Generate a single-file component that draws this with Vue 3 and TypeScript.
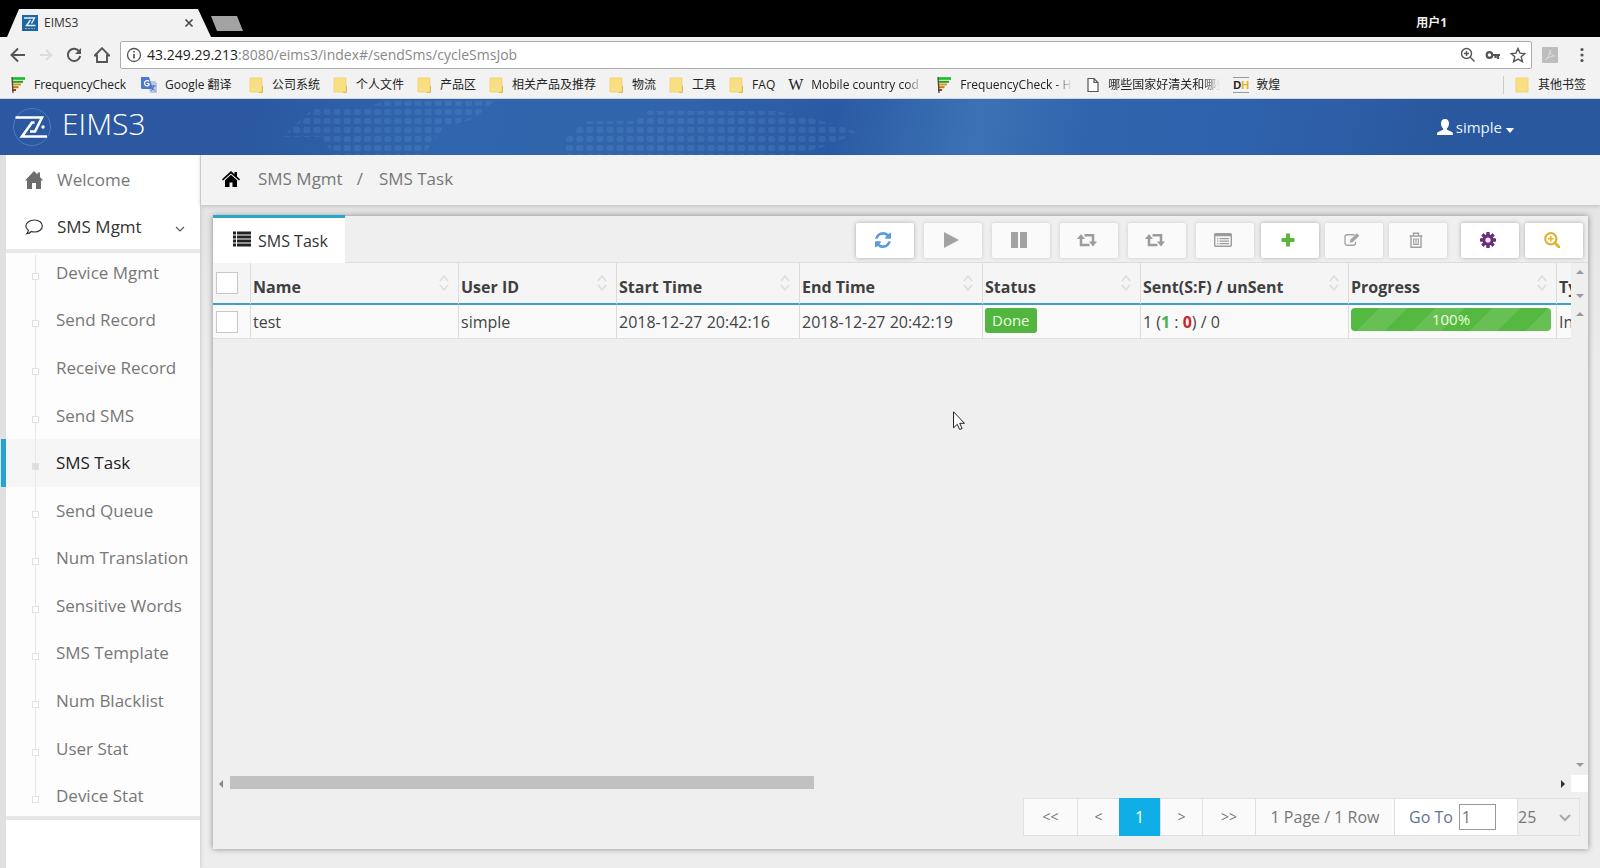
<script setup lang="ts">
import { ref } from 'vue'

interface Bookmark {
  icon: 'freq' | 'translate' | 'folder' | 'wiki' | 'doc' | 'dh'
  label: string
  clipped?: boolean
}

const bookmarks: Bookmark[] = [
  { icon: 'freq', label: 'FrequencyCheck' },
  { icon: 'translate', label: 'Google 翻译' },
  { icon: 'folder', label: '公司系统' },
  { icon: 'folder', label: '个人文件' },
  { icon: 'folder', label: '产品区' },
  { icon: 'folder', label: '相关产品及推荐' },
  { icon: 'folder', label: '物流' },
  { icon: 'folder', label: '工具' },
  { icon: 'folder', label: 'FAQ' },
  { icon: 'wiki', label: 'Mobile country cod', clipped: true },
  { icon: 'freq', label: 'FrequencyCheck - H', clipped: true },
  { icon: 'doc', label: '哪些国家好清关和哪些', clipped: true },
  { icon: 'dh', label: '敦煌' },
]

const subItems: string[] = [
  'Device Mgmt', 'Send Record', 'Receive Record', 'Send SMS', 'SMS Task', 'Send Queue',
  'Num Translation', 'Sensitive Words', 'SMS Template', 'Num Blacklist', 'User Stat', 'Device Stat',
]
const activeItem = ref('SMS Task')

const columns: string[] = ['Name', 'User ID', 'Start Time', 'End Time', 'Status', 'Sent(S:F) / unSent', 'Progress', 'Type']
const address = ref('43.249.29.213:8080/eims3/index#/sendSms/cycleSmsJob')
const progress = ref(100)
const goTo = ref('1')
const pageSize = ref('25')
const gearAngles: number[] = [0, 45, 90, 135, 180, 225, 270, 315]
</script>

<template>
  <div class="window">
    <div class="tabstrip">
      <div class="tab">
        <svg class="favicon" viewBox="0 0 16 16" aria-hidden="true">
          <rect width="16" height="16" fill="#20659f" />
          <path d="M2 3h10.500L9.500 8.500M8.500 5L4.500 10.500h9" fill="none" stroke="#e4f2ff" stroke-width="1.400" />
          <path d="M3 13.500h10" stroke="#83aed3" stroke-dasharray="2 1" />
        </svg>
        <span class="tab-title">EIMS3</span>
        <button class="tab-close" aria-label="Close tab">
          <svg viewBox="0 0 10 10"><path d="M1.500 1.500l7 7M8.500 1.500l-7 7" stroke="#4a4a4a" stroke-width="1.700" /></svg>
        </button>
      </div>
      <button class="new-tab" aria-label="New tab"></button>
      <span class="profile">用户1</span>
    </div>

    <div class="toolbar">
      <button class="nav" aria-label="Back">
        <svg viewBox="0 0 16 16"><path d="M15 8H2M8 1.500L1.500 8 8 14.500" fill="none" stroke="#555" stroke-width="2" /></svg>
      </button>
      <button class="nav" aria-label="Forward">
        <svg viewBox="0 0 16 16"><path d="M2 8h11M8 3l5.500 5L8 13" fill="none" stroke="#dcdcdc" stroke-width="2" /></svg>
      </button>
      <button class="nav" aria-label="Reload">
        <svg viewBox="0 0 16 16"><path d="M13.300 4.500A6.200 6.200 0 1 0 14.200 9" fill="none" stroke="#555" stroke-width="2" /><path d="M15 1v6H9z" fill="#555" /></svg>
      </button>
      <button class="nav" aria-label="Home">
        <svg viewBox="0 0 16 16"><path d="M.8 8.500L8 1.200l7.200 7.300H13V15H3V8.500z" fill="none" stroke="#555" stroke-width="1.900" /></svg>
      </button>
      <div class="omnibox">
        <svg class="info" viewBox="0 0 16 16" aria-hidden="true"><circle cx="8" cy="8" r="6.500" fill="none" stroke="#555" stroke-width="1.300" /><path d="M8 7v4.500M8 4v1.600" stroke="#555" stroke-width="1.700" /></svg>
        <div class="address">
          <a href="#/sendSms/cycleSmsJob"><b>{{ address.slice(0, 13) }}</b>{{ address.slice(13) }}</a>
        </div>
        <svg class="omni-icon" viewBox="0 0 16 16" aria-hidden="true"><circle cx="6.500" cy="6.500" r="5" fill="none" stroke="#555" stroke-width="1.400" /><path d="M10.300 10.300L14.500 14.500M4 6.500h5M6.500 4v5" stroke="#555" stroke-width="1.400" /></svg>
        <svg class="omni-icon" viewBox="0 0 16 16" aria-hidden="true"><circle cx="4.500" cy="8" r="2.800" fill="none" stroke="#555" stroke-width="2.200" /><path d="M7 8h8M13 8v4M10.500 8v3" stroke="#555" stroke-width="2.200" /></svg>
        <svg class="omni-icon" viewBox="0 0 16 16" aria-hidden="true"><path d="M8 1.500l2 4.600 5 .4-3.800 3.300 1.200 4.900L8 12.100l-4.400 2.600 1.200-4.900L1 6.500l5-.4z" fill="none" stroke="#555" stroke-width="1.400" /></svg>
      </div>
      <svg class="ext" viewBox="0 0 16 16" aria-hidden="true"><rect width="16" height="16" rx="1" fill="#bdbdbd" /><path d="M3 13c3-2 5-6 5-10 0 4 2 6 5 6-3 0-7 1-10 4z" fill="none" stroke="#dadada" /></svg>
      <button class="dots" aria-label="Browser menu"><svg viewBox="0 0 4 16"><circle cx="2" cy="2.500" r="1.600" /><circle cx="2" cy="8" r="1.600" /><circle cx="2" cy="13.500" r="1.600" /></svg></button>
    </div>

    <nav class="bookmarks">
      <a v-for="(b, i) in bookmarks" :key="i" href="#" class="bookmark" :class="b.icon">
        <svg v-if="b.icon === 'freq'" class="bm-icon" viewBox="0 0 16 16" aria-hidden="true">
          <path d="M2 1.500h13" stroke="#16bb2c" stroke-width="2.600" /><path d="M2 4.800h11" stroke="#2f9a1b" stroke-width="2" />
          <path d="M2 7.500h9" stroke="#c5a216" stroke-width="2" /><path d="M2 10.200h6.500" stroke="#c47a22" stroke-width="2" />
          <path d="M2 13h4" stroke="#a33a20" stroke-width="2" /><path d="M2 0l1 16" stroke="#4c4330" stroke-width="1.300" />
        </svg>
        <svg v-else-if="b.icon === 'translate'" class="bm-icon" viewBox="0 0 16 16" aria-hidden="true">
          <path d="M6 4h8l2 2v10H9z" fill="#b9c7e4" /><path d="M0 0h8l4 12H1L0 11z" fill="#4c79cf" />
          <path d="M8 4.500A2.600 2.600 0 1 0 8 8V6.500H5.700" fill="none" stroke="#fff" stroke-width="1.200" /><path d="M10 9h5M12.500 8v1c0 2-1 4-2.500 5M11 10c.5 2 2 3 3.500 4" fill="none" stroke="#5672aa" />
        </svg>
        <svg v-else-if="b.icon === 'folder'" class="bm-icon" viewBox="0 0 16 16" aria-hidden="true">
          <path d="M1 1h12v14H1z" fill="#f8df83" /><path d="M1 1h12v14H1z" fill="none" stroke="#efd478" /><path d="M13.500 9v6.500H10" stroke="#dfba50" fill="none" />
        </svg>
        <span v-else-if="b.icon === 'wiki'" class="bm-icon w-mark">W</span>
        <svg v-else-if="b.icon === 'doc'" class="bm-icon" viewBox="0 0 16 16" aria-hidden="true"><path d="M3 1.500h6l4 4v9H3zM9 1.500v4h4" fill="#fff" stroke="#555" stroke-width="1.200" /></svg>
        <span v-else class="bm-icon dh-mark"><b>D</b><b>H</b></span>
        <span class="bm-label" :class="{ clipped: b.clipped }">{{ b.label }}</span>
      </a>
      <a href="#" class="bookmark other">
        <svg class="bm-icon" viewBox="0 0 16 16" aria-hidden="true"><path d="M1 1h12v14H1z" fill="#f8df83" stroke="#efd478" /></svg>
        <span class="bm-label">其他书签</span>
      </a>
    </nav>

    <header class="banner">
      <svg class="world" viewBox="0 0 760 56" preserveAspectRatio="none" aria-hidden="true">
        <defs>
          <pattern id="dots" width="10" height="9" patternUnits="userSpaceOnUse"><rect x="1" y="1" width="7" height="6" rx="2" fill="#8ebcf0" opacity=".13" /></pattern>
        </defs>
        <path d="M10 38l30-28h50l20-8h110l-20 18-30 8-20 28H60l-10-18z" fill="url(#dots)" />
        <path d="M290 40l20-18h50l10-10h130l60 14 20 8-30 12-30 10H290z" fill="url(#dots)" />
      </svg>
      <a href="#" class="brand">
        <svg class="logo" viewBox="0 0 40 40" aria-hidden="true">
          <circle cx="20" cy="20" r="18.500" fill="none" stroke="#4a7cc0" stroke-width="1" />
          <path d="M3.500 10.500h26.500L23 24.500h-5" fill="none" stroke="#fff" stroke-width="2.600" />
          <path d="M22.500 15.500L20 15.500L10 29.500h25" fill="none" stroke="#fff" stroke-width="2.600" />
          <circle cx="31" cy="20" r="1.700" fill="#fff" />
        </svg>
        <span>EIMS3</span>
      </a>
      <button class="user">
        <svg class="person" viewBox="0 0 16 16" aria-hidden="true"><path d="M8 0c2.800 0 4 2 4 4.500 0 2-.8 3.800-2 4.800v1.400l5 2.300c.7.400 1 1.500 1 3H0c0-1.500.3-2.600 1-3l5-2.300V9.300c-1.200-1-2-2.800-2-4.800C4 2 5.200 0 8 0z" fill="#fff" /></svg>
        simple
        <svg class="caret" viewBox="0 0 10 6" aria-hidden="true"><path d="M0 0h10L5 6z" fill="#fff" /></svg>
      </button>
    </header>

    <div class="body">
      <aside class="sidebar">
        <a href="#" class="menu-item">
          <svg viewBox="0 0 18 18" aria-hidden="true"><path d="M9 0l3.500 3.500V1.500H15V6l3 3.500h-2V18h-5v-6H7v6H2V9.500H0z" fill="#6d6d6d" /></svg>
          <span>Welcome</span>
        </a>
        <a href="#" class="menu-item open">
          <svg viewBox="0 0 18 18" aria-hidden="true"><path d="M9.500 2C14 2 17.300 4.600 17.300 8s-3.300 6-7.800 6c-1.200 0-2.200-.2-3.200-.5-1.200 1.300-2.600 2-4.500 2.200 1-1 1.500-2 1.500-3.500C1.700 11 .8 9.700.8 8c0-3.400 4.200-6 8.700-6z" fill="none" stroke="#333" stroke-width="1.200" /></svg>
          <span>SMS Mgmt</span>
          <svg class="chev" viewBox="0 0 10 6" aria-hidden="true"><path d="M1 1l4 4 4-4" fill="none" stroke="#555" stroke-width="1.200" /></svg>
        </a>
        <ul class="submenu">
          <li v-for="item in subItems" :key="item" :class="{ active: item === activeItem }">
            <a href="#" @click.prevent="activeItem = item"><i class="node"></i>{{ item }}</a>
          </li>
        </ul>
      </aside>

      <main class="main">
        <nav class="crumbs">
          <svg viewBox="0 0 18 16" aria-hidden="true"><path d="M9 0l3.500 3.200V1H15v4.500L18 8.300l-1 1.200L9 2.400 1 9.500 0 8.300z" /><path d="M9 3.800l6 5.400V16h-4.500v-4.500h-3V16H3V9.200z" /></svg>
          <a href="#">SMS Mgmt</a><span class="sep">/</span><a href="#">SMS Task</a>
        </nav>

        <section class="panel">
          <div class="panel-head">
            <button class="panel-tab">
              <svg viewBox="0 0 18 16" aria-hidden="true"><path d="M0 2h3M0 6h3M0 10h3M0 14h3M4 2h14M4 6h14M4 10h14M4 14h14" stroke="#222" stroke-width="2.900" /></svg>
              SMS Task
            </button>
            <div class="tools">
              <div class="group wide">
                <button class="tool" aria-label="Refresh"><svg viewBox="0 0 1536 1536"><path fill="#5b9bdc" d="M1511 928q0 5-1 7-64 268-268 434.500t-478 166.500q-146 0-282.500-55t-243.500-157l-129 129q-19 19-45 19t-45-19-19-45v-448q0-26 19-45t45-19h448q26 0 45 19t19 45-19 45l-137 137q71 66 161 102t187 36q134 0 250-65t186-179q11-17 53-117 8-23 30-23h192q13 0 22.500 9.500t9.500 22.500zm25-800v448q0 26-19 45t-45 19h-448q-26 0-45-19t-19-45 19-45l138-138q-148-137-349-137-134 0-250 65t-186 179q-11 17-53 117-8 23-30 23h-199q-13 0-22.500-9.500t-9.500-22.500v-7q65-268 270-434.500t480-166.500q146 0 284 55.500t245 156.500l130-129q19-19 45-19t45 19 19 45z" /></svg></button>
                <button class="tool off" aria-label="Start"><svg viewBox="0 0 16 16"><path d="M1 0l15 8-15 8z" fill="#a2a2a2" /></svg></button>
                <button class="tool off" aria-label="Pause"><svg viewBox="0 0 16 16"><path d="M0 0h7v16H0zM9 0h7v16H9z" fill="#a2a2a2" /></svg></button>
                <button v-for="n in 2" :key="n" class="tool off" aria-label="Repeat"><svg class="retweet" viewBox="0 0 20 14"><path d="M4 4v8h8.500M7.500 2.200H16V10" fill="none" stroke="#9c9c9c" stroke-width="2.500" /><path d="M0 6l4-5 4 5zM12 8.500l4 5 4-5z" fill="#9c9c9c" /></svg></button>
                <button class="tool off" aria-label="Details"><svg class="list" viewBox="0 0 18 14"><rect x=".7" y=".7" width="16.600" height="12.600" rx="1" fill="none" stroke="#9c9c9c" stroke-width="1.400" /><path d="M1 2h16" stroke="#9c9c9c" stroke-width="2.600" /><path d="M3 5.700h1.300M5.500 5.700H15M3 8.200h1.300M5.500 8.200H15M3 10.700h1.300M5.500 10.700H15" stroke="#9c9c9c" stroke-width="1.300" /></svg></button>
              </div>
              <div class="group edit">
                <button class="tool" aria-label="Add"><svg class="plus" viewBox="0 0 14 14"><path d="M7 .5v13M.5 7h13" stroke="#5cb53c" stroke-width="4" /></svg></button>
                <button class="tool off" aria-label="Edit"><svg class="list" viewBox="0 0 18 16"><path d="M12 2H3.500Q1 2 1 4.500v7Q1 14 3.500 14h7q2.500 0 2.500-2.500V10" fill="none" stroke="#a5a5a5" stroke-width="1.500" /><path d="M6.500 11l.7-3.500L14.500.3l2.900 2.800L10 10.300z" fill="#a5a5a5" /></svg></button>
                <button class="tool off" aria-label="Delete"><svg viewBox="0 0 14 16"><path d="M.5 4h13M4.500 4V1.200h5V4M2 4v11.200h10V4" fill="none" stroke="#a0a0a0" stroke-width="1.400" /><path d="M4.700 6.500v6.500M7 6.500v6.500M9.300 6.500v6.500M4.500 7h5M4.500 12.500h5" stroke="#a5a5a5" stroke-width="1.200" /></svg></button>
              </div>
              <div class="group">
                <button class="tool" aria-label="Settings"><svg viewBox="0 0 16 16"><circle cx="8" cy="8" r="4.200" fill="none" stroke="#6d2a80" stroke-width="3.200" /><rect v-for="a in gearAngles" :key="a" x="6.300" y="0" width="3.400" height="3.500" rx=".6" fill="#6d2a80" :transform="`rotate(${a} 8 8)`" /></svg></button>
                <button class="tool" aria-label="Search"><svg viewBox="0 0 16 16"><circle cx="6.800" cy="6.800" r="5.600" fill="none" stroke="#e2b32b" stroke-width="2.200" /><path d="M11 11l4 4" stroke="#e2b32b" stroke-width="2.800" stroke-linecap="round" /><path d="M4 6.800h5.600M6.800 4v5.600" stroke="#e2b32b" stroke-width="1.500" /></svg></button>
              </div>
            </div>
          </div>

          <div class="grid">
            <div class="grid-view">
              <table>
                <colgroup>
                  <col class="c-check" /><col class="c-wide" /><col class="c-mid" /><col class="c-time" /><col class="c-time" /><col class="c-mid" /><col class="c-wide" /><col class="c-wide" /><col class="c-mid" />
                </colgroup>
                <thead>
                  <tr>
                    <th><input type="checkbox" aria-label="Select all rows" /></th>
                    <th v-for="c in columns" :key="c">
                      <div class="th-in"><span>{{ c }}</span>
                        <svg class="sort" viewBox="0 0 12 18" aria-hidden="true"><path d="M2 7l4-5 4 5M2 11l4 5 4-5" fill="none" stroke="#dedede" stroke-width="1.700" /></svg>
                      </div>
                    </th>
                  </tr>
                </thead>
                <tbody>
                  <tr>
                    <td><input type="checkbox" aria-label="Select test" /></td>
                    <td>test</td>
                    <td>simple</td>
                    <td>2018-12-27 20:42:16</td>
                    <td>2018-12-27 20:42:19</td>
                    <td><span class="badge">Done</span></td>
                    <td>1 (<b class="ok">1</b> : <b class="bad">0</b>) / 0</td>
                    <td><div class="progress"><div class="bar" :style="{ width: progress + '%' }">{{ progress }}%</div></div></td>
                    <td>In</td>
                  </tr>
                </tbody>
              </table>
            </div>
            <div class="gutter" aria-hidden="true">
              <div class="g-head"><i class="up"></i><i class="down"></i></div>
              <div class="g-body"><i class="up"></i><i class="down"></i></div>
            </div>
          </div>

          <div class="hscroll" aria-hidden="true">
            <i class="left"></i><div class="track"><div class="thumb"></div></div><i class="right"></i><div class="corner"></div>
          </div>

          <div class="pager">
            <button class="p-first">&lt;&lt;</button>
            <button class="p-prev">&lt;</button>
            <button class="p-cur">1</button>
            <button class="p-next">&gt;</button>
            <button class="p-last">&gt;&gt;</button>
            <span class="p-info">1 Page / 1 Row</span>
            <label class="p-goto"><span>Go To</span><input v-model="goTo" type="text" /></label>
            <div class="p-size">
              <select v-model="pageSize" aria-label="Rows per page"><option>25</option><option>50</option><option>100</option></select>
              <svg viewBox="0 0 12 8" aria-hidden="true"><path d="M1 1l5 5 5-5" fill="none" stroke="#aaa" stroke-width="2" /></svg>
            </div>
          </div>
        </section>
      </main>
    </div>

    <svg class="pointer" viewBox="0 0 12 19" aria-hidden="true"><path d="M.5.800v16l3.800-3.500 2.400 5.200 2.400-1-2.400-5.200h4.800z" fill="#fff" stroke="#222" /></svg>
  </div>
</template>

<style>
html, body { margin: 0; }
</style>

<style scoped>
* { box-sizing: border-box; }
.window {
  position: relative;
  min-height: 100vh;
  display: flex;
  flex-direction: column;
  overflow: hidden;
  background: #ededed;
  font: 16px/24px "Open Sans", "Noto Sans", "Noto Sans CJK SC", sans-serif;
  color: #444;
}
button { font: inherit; color: inherit; border: 0; padding: 0; margin: 0; background: none; cursor: pointer; }
a { color: inherit; text-decoration: none; }
svg { display: block; flex: none; }

.tabstrip { height: 37px; background: #000; display: flex; align-items: flex-end; padding-left: 7px; }
.tab { width: 204px; height: 28px; padding: 0 15px; display: flex; align-items: center; background: #f2f2f2; clip-path: polygon(12px 0, 191px 0, 204px 100%, 0 100%); }
.favicon { width: 16px; height: 16px; }
.tab-title { font-size: 12px; line-height: 16px; margin-left: 6px; color: #333; flex: 1; }
.tab-close { width: 10px; height: 10px; margin-right: 2px; }
.new-tab { width: 32px; height: 15px; margin-bottom: 6px; background: #a3a3a3; clip-path: polygon(0 0, 26px 0, 100% 100%, 6px 100%); }
.profile { margin: 0 153px 5px auto; color: #eee; font-size: 12px; line-height: 18px; font-weight: 700; }

.toolbar { height: 36px; background: #f2f2f2; display: flex; align-items: center; padding: 0 10px; }
.nav { width: 16px; height: 16px; margin-right: 12px; }
.nav svg { width: 16px; height: 16px; }
.omnibox { flex: 1; min-width: 0; height: 28px; margin: 0 10px 0 -2px; background: #fff; border: 1px solid #acacac; border-radius: 2px; display: flex; align-items: center; padding: 0 5px; gap: 9px; }
.info { width: 16px; height: 16px; margin-right: -4px; }
.address { flex: 1; min-width: 0; font-size: 14px; line-height: 20px; color: #888; overflow: hidden; white-space: nowrap; }
.address b { font-weight: 400; color: #222; }
.omni-icon { width: 16px; height: 16px; }
.ext { width: 16px; height: 16px; }
.dots { width: 16px; height: 16px; margin-left: 16px; display: flex; justify-content: center; }
.dots svg { width: 4px; height: 16px; fill: #555; }

.bookmarks { height: 26px; background: #f2f2f2; border-bottom: 1px solid #d4d4d4; display: flex; align-items: center; padding: 0 14px 2px 10px; gap: 13px; font-size: 12px; line-height: 18px; color: #222; }
.bookmark { display: flex; align-items: center; gap: 7px; white-space: nowrap; }
.bm-icon { width: 16px; height: 16px; flex: none; }
.freq, .translate { gap: 8px; }
.freq .bm-label { min-width: 94px; }
.translate .bm-label { min-width: 71px; }
.w-mark { font: 16px/16px "Liberation Serif", serif; }
.dh-mark { border: solid #999; border-width: 1px 0; font: 11px/14px "Liberation Sans", sans-serif; display: flex; }
.dh-mark b:last-child { color: #e3b512; }
.bookmark .clipped { width: 112px; overflow: hidden; mask-image: linear-gradient(90deg, #000 85%, transparent); }
.other { margin-left: auto; border-left: 1px solid #ccc; padding-left: 11px; }

.banner { height: 56px; background: linear-gradient(100deg, #2b58a0 0 15%, #2f66ad 28%, #3164ab 42%, #2a5aa3 52%, #3c72b5 61%, #3064ad 68%, #2f62ac 78%, #2a589f 90%); display: flex; align-items: center; justify-content: space-between; position: relative; padding: 0 85px 0 12px; }
.world { position: absolute; left: 17%; top: 0; width: 48%; height: 56px; }
.brand { position: relative; display: flex; align-items: center; gap: 10px; color: #fff; font-size: 30px; line-height: 40px; font-weight: 300; }
.brand span { padding-bottom: 6px; }
.logo { width: 40px; height: 40px; }
.user { position: relative; display: flex; align-items: center; gap: 3px; color: #e9f3ff; font-size: 15px; }
.person { width: 16px; height: 16px; }
.caret { width: 10px; height: 5px; margin-top: 6px; }

.body { flex: 1; display: flex; background: linear-gradient(#e2e2e2, #ededed 30%); }
.sidebar { width: 200px; flex: none; border-left: 6px solid #e0e0e0; background: #fff; font-size: 17px; color: #777; box-shadow: 0 0 4px #bbb; }
.menu-item { height: 48px; display: flex; align-items: center; padding: 2px 15px 0 19px; }
.menu-item svg { width: 18px; height: 18px; margin-right: 14px; }
.menu-item.open { height: 46px; color: #333; }
.menu-item .chev { width: 10px; height: 6px; margin: 4px 0 0 auto; }
.submenu { list-style: none; margin: 0; padding: 0; height: 571px; display: grid; grid-auto-rows: 1fr; background: #fdfdfd; box-shadow: inset 0 4px #e9e9e9, inset 0 -4px #e6e6e6; }
.submenu a { position: relative; height: 100%; display: flex; align-items: center; padding-left: 50px; }
.submenu a::before { content: ""; position: absolute; left: 29px; top: 0; bottom: 0; width: 1px; background: #e8e8e8; }
.submenu li:first-child a::before { top: 6px; }
.submenu li:last-child a::before { bottom: 50%; }
.node { position: absolute; left: 26px; top: 50%; width: 7px; height: 7px; border: 1px solid #e2e2e2; background: #fff; }
.active a { background: #f6f6f6; color: #222; box-shadow: -5px 0 #22a5d2; }
.active .node { background: #ddd; }

.main { flex: 1; min-width: 0; display: flex; flex-direction: column; }
.crumbs { height: 50px; margin-left: 1px; flex: none; background: #f3f3f3; box-shadow: 0 1px 4px #bbb; display: flex; align-items: center; padding: 0 20px 2px 21px; color: #777; font-size: 17px; }
.crumbs svg { width: 18px; height: 16px; margin-right: 18px; }
.crumbs .sep { margin: 0 16px 0 14px; }

.panel { flex: 1; margin: 11px 12px 19px 13px; background: #efefef; box-shadow: 0 0 6px #888; display: flex; flex-direction: column; min-width: 0; }
.panel-head { height: 47px; flex: none; display: flex; justify-content: space-between; align-items: flex-end; border-bottom: 1px solid #ddd; }
.panel-tab { height: 48px; padding: 0 17px 0 20px; background: #fff; border-top: 3px solid #2ba6cb; display: flex; align-items: center; gap: 7px; color: #333; margin-bottom: -1px; }
.panel-tab svg { width: 18px; height: 16px; margin-bottom: 4px; }
.tools { display: flex; align-items: center; align-self: center; padding-right: 5px; margin-top: 2px; }
.group { display: flex; gap: 6px; }
.wide { gap: 10px; margin-right: 7px; }
.edit { margin-right: 14px; }
.tool { width: 58px; height: 35px; padding-right: 4px; background: #fff; border-radius: 2px; box-shadow: 0 0 4px #aaa; display: flex; align-items: center; justify-content: center; }
.tool svg { height: 16px; width: 16px; }
.tool.off { background: #fafafa; box-shadow: 0 0 4px #ccc; }
.tool .retweet { width: 20px; height: 14px; }
.tool .list { width: 18px; height: 14px; }
.tool .plus { width: 14px; height: 14px; }

.grid { flex: 1; display: flex; min-height: 0; }
.grid-view { flex: 1; min-width: 0; overflow: hidden; }
table { border-collapse: separate; border-spacing: 0; table-layout: fixed; width: 1501px; }
.c-check { width: 37px; }
.c-wide { width: 208px; }
.c-mid { width: 158px; }
.c-time { width: 183px; }
th, td { padding: 0 5px 0 2px; text-align: left; white-space: nowrap; border-left: 1px solid #dcdcdc; background: #f9f9f9; }
th:first-child, td:first-child { border-left: 0; padding-left: 3px; }
th { height: 42px; background: #f5f5f5; border-bottom: 2px solid #3f9fc4; color: #3f3f3f; }
td { height: 34px; border-bottom: 1px solid #e0e0e0; line-height: 32px; }
.th-in { display: flex; justify-content: space-between; align-items: center; }
.th-in span { padding-top: 8px; }
.sort { width: 12px; height: 18px; margin-right: 3px; }
input[type="checkbox"] { appearance: none; display: block; width: 22px; height: 22px; margin: 0; border: 1px solid #c8c8c8; background: #fff; }
.badge { display: block; width: max-content; margin-bottom: 2px; padding: 0 7px; line-height: 25px; background: #52b540; color: #eaffdf; border-radius: 3px; font-size: 15px; }
.ok { color: #4caf50; }
.bad { color: #c62828; }
.progress { height: 23px; margin-bottom: 4px; border-radius: 4px; overflow: hidden; background: #ddd; }
.bar { height: 100%; line-height: 22px; text-align: center; color: #eaffdf; font-size: 15px; background: repeating-linear-gradient(135deg, #55b840 0 20px, #68c054 20px 40px); }
.gutter { width: 17px; flex: none; display: flex; flex-direction: column; }
.gutter i, .hscroll i { display: block; width: 0; height: 0; border: 4px solid transparent; flex: none; }
.gutter .up { border-top: 0; border-bottom-color: #999; }
.gutter .down { border-bottom: 0; border-top-color: #999; }
.g-head, .g-body { display: flex; flex-direction: column; justify-content: space-between; align-items: center; }
.g-head { height: 42px; padding: 7px 0; }
.g-body { flex: 1; padding: 7px 0 8px; }

.hscroll { height: 17px; flex: none; display: flex; align-items: center; }
.hscroll .left { margin: 0 11px 0 6px; border-left: 0; border-right-color: #888; }
.hscroll .right { margin: 0 6px 0 3px; border-right: 0; border-left-color: #333; }
.track { flex: 1; margin: 0 0 2px -4px; }
.thumb { width: 44%; height: 13px; background: #c1c1c1; }
.corner { width: 17px; height: 17px; background: #fff; }

.pager { display: flex; align-self: flex-end; height: 38px; flex: none; margin: 6px 8px 13px; color: #777; border: 1px solid #e0e0e0; background: #fafafa; }
.pager > * { display: flex; align-items: center; justify-content: center; border-left: 1px solid #e0e0e0; }
.pager > :first-child { border-left: 0; }
.pager button { font-size: 14px; }
.p-first { width: 53px; }
.p-prev, .p-next { width: 42px; }
.pager .p-cur { width: 41px; margin: -1px 0; background: #10aee6; color: #fff; border: 0; font-size: 16px; }
.p-last { width: 53px; }
.p-info { width: 139px; white-space: nowrap; }
.pager .p-goto { width: 123px; justify-content: flex-start; padding-left: 14px; gap: 6px; background: #fff; color: #5d7394; }
.p-goto input { width: 37px; height: 26px; border: 1px solid #999; background: #fff; padding: 0 2px; font: inherit; color: #777; }
.p-size { position: relative; width: 62px; background: #f0f0f0; }
.p-size select { appearance: none; width: 100%; height: 100%; border: 0; background: none; font: inherit; color: #777; padding: 0; }
.p-size svg { position: absolute; right: 8px; top: 15px; width: 12px; height: 8px; pointer-events: none; }

.pointer { position: absolute; left: 953px; top: 411px; width: 12px; height: 19px; }
</style>
